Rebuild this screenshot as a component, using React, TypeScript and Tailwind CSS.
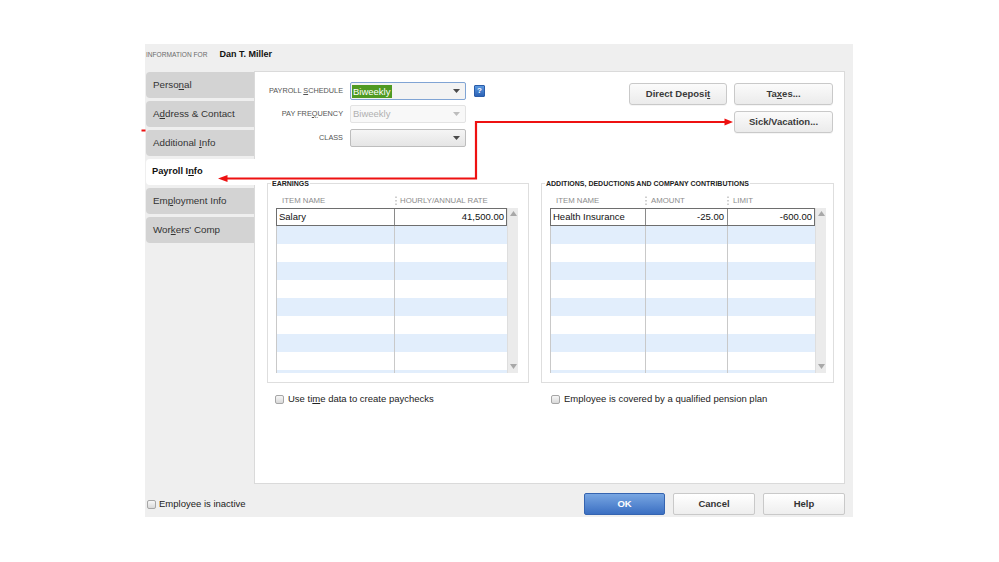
import React from "react";

function U({ children }: { children: React.ReactNode }) {
  return <span className="underline underline-offset-[1px] decoration-[1px]">{children}</span>;
}

function Caret({ c }: { c: string }) {
  return (
    <svg width="7" height="4" viewBox="0 0 7 4">
      <path d="M0 0H7L3.5 4Z" fill={c} />
    </svg>
  );
}

function Check() {
  return (
    <div className="w-[9px] h-[9px] shrink-0 rounded-[2px] border border-[#a6a6a6] bg-linear-to-b from-[#f7f7f7] to-[#d9d9d9]" />
  );
}

function Dots() {
  return (
    <svg width="2" height="10" viewBox="0 0 2 10" className="shrink-0">
      <rect x="0.5" y="0.5" width="1" height="1.5" fill="#a0a0a0" />
      <rect x="0.5" y="4" width="1" height="1.5" fill="#a0a0a0" />
      <rect x="0.5" y="7.5" width="1" height="1.5" fill="#a0a0a0" />
    </svg>
  );
}

function Scrollbar() {
  return (
    <div className="w-[11px] h-full bg-[#ebebeb] border-l border-[#dedede] flex flex-col items-center justify-between pt-[3px] pb-[4px]">
      <svg width="7" height="5" viewBox="0 0 7 5">
        <path d="M0 5H7L3.5 0Z" fill="#a8a8a8" />
      </svg>
      <svg width="7" height="5" viewBox="0 0 7 5">
        <path d="M0 0H7L3.5 5Z" fill="#a8a8a8" />
      </svg>
    </div>
  );
}

function Tab({ label, active }: { label: React.ReactNode; active?: boolean }) {
  return active ? (
    <div className="relative z-10 w-[109px] h-[26px] mb-[3px] bg-white rounded-l-[4px] flex items-center pl-[6px] text-[9.3px] font-bold text-[#111]">
      {label}
    </div>
  ) : (
    <div className="w-[108px] h-[26px] mb-[3px] bg-[#d3d3d3] rounded-l-[4px] flex items-center pl-[7px] text-[9.8px] text-[#333]">
      {label}
    </div>
  );
}

function Btn({ children, w }: { children: React.ReactNode; w: string }) {
  return (
    <div
      className={`${w} h-[22px] flex items-center justify-center rounded-[3px] border border-[#c9c9c9] bg-linear-to-b from-[#fbfbfb] to-[#ebebeb] text-[9.5px] font-bold text-[#3a3a3a] shadow-[0_1px_0_rgba(0,0,0,0.04)]`}
    >
      {children}
    </div>
  );
}

const rows = [0, 1, 2, 3, 4, 5, 6, 7, 8, 9];

function EarningsTable() {
  return (
    <div className="flex h-[165px]">
      <div className="w-[231px] h-full overflow-hidden flex flex-col">
        {rows.map((i) =>
          i === 0 ? (
            <div key={i} className="flex h-[18px] shrink-0 bg-white outline-1 outline-[#6e6e6e] -outline-offset-1 text-[9.5px] text-[#111]">
              <div className="w-[119px] h-full border-r border-[#8a8a8a] flex items-center pl-[3px]">Salary</div>
              <div className="flex-1 h-full flex items-center justify-end pr-[3px]">41,500.00</div>
            </div>
          ) : (
            <div key={i} className={`flex h-[18px] shrink-0 ${i % 2 === 1 ? "bg-[#e2eefc]" : "bg-white"}`}>
              <div className="w-[119px] h-full border-l border-r border-[#c9c9c9]" />
              <div className="flex-1 h-full" />
            </div>
          )
        )}
      </div>
      <Scrollbar />
    </div>
  );
}

function AdditionsTable() {
  return (
    <div className="flex h-[165px]">
      <div className="w-[265px] h-full overflow-hidden flex flex-col">
        {rows.map((i) =>
          i === 0 ? (
            <div key={i} className="flex h-[18px] shrink-0 bg-white outline-1 outline-[#6e6e6e] -outline-offset-1 text-[9.5px] text-[#111]">
              <div className="w-[96px] h-full border-r border-[#8a8a8a] flex items-center pl-[3px]">Health Insurance</div>
              <div className="w-[82px] h-full border-r border-[#8a8a8a] flex items-center justify-end pr-[3px]">-25.00</div>
              <div className="flex-1 h-full flex items-center justify-end pr-[3px]">-600.00</div>
            </div>
          ) : (
            <div key={i} className={`flex h-[18px] shrink-0 ${i % 2 === 1 ? "bg-[#e2eefc]" : "bg-white"}`}>
              <div className="w-[96px] h-full border-l border-r border-[#c9c9c9]" />
              <div className="w-[82px] h-full border-r border-[#c9c9c9]" />
              <div className="flex-1 h-full" />
            </div>
          )
        )}
      </div>
      <Scrollbar />
    </div>
  );
}

export default function App() {
  return (
    <div className="relative w-[999px] h-[562px] bg-white overflow-hidden pt-[44px] pl-[145px] font-['Liberation_Sans',Arial,Helvetica,sans-serif]">
      <div className="w-[708px] h-[473px] bg-[#efefef] flex flex-col">
        {/* header */}
        <div className="h-[27px] shrink-0 flex items-center pb-[5px] pl-[1px]">
          <span className="text-[6.6px] text-[#6b6b6b]">INFORMATION FOR</span>
          <span className="ml-[12px] text-[9px] font-bold text-[#111]">Dan T. Miller</span>
        </div>

        {/* body */}
        <div className="flex h-[413px] shrink-0">
          <div className="w-[109px] shrink-0 pt-[1px] pl-[1px]">
            <Tab label={<>Perso<U>n</U>al</>} />
            <Tab label={<>A<U>d</U>dress &amp; Contact</>} />
            <Tab label={<><span className="mr-[3px]">Additional</span><U>I</U>nfo</>} />
            <Tab active label={<>Payroll I<U>n</U>fo</>} />
            <Tab label={<>Em<U>p</U>loyment Info</>} />
            <Tab label={<>Wor<U>k</U>ers' Comp</>} />
          </div>

          <div className="w-[591px] h-[413px] bg-white border border-[#dadada] flex flex-col">
            {/* top section */}
            <div className="h-[111px] shrink-0 flex">
              <div className="flex flex-col pt-[10px]">
                <div className="flex items-center h-[18px]">
                  <div className="w-[88px] text-right text-[7.3px] text-[#555]">
                    PAYROLL <U>S</U>CHEDULE
                  </div>
                  <div className="ml-[7px] w-[116px] h-[18px] rounded-[2px] border border-[#80a4d4] bg-[#f3f3f3] flex items-center pl-[1px] pr-[5px]">
                    <span className="bg-[#4f9a22] text-white text-[9.5px] h-[13px] leading-[13px] px-[1px]">Biweekly</span>
                    <span className="ml-auto">
                      <Caret c="#4a4a4a" />
                    </span>
                  </div>
                  <div className="ml-[8px] w-[11px] h-[12px] rounded-[1px] border border-[#2a5ca8] bg-linear-to-b from-[#5b98e0] to-[#2d63b6] flex items-center justify-center text-white text-[8px] font-bold leading-none">
                    ?
                  </div>
                </div>
                <div className="flex items-center h-[18px] mt-[5px]">
                  <div className="w-[88px] text-right text-[7.3px] text-[#555]">
                    PAY FRE<U>Q</U>UENCY
                  </div>
                  <div className="ml-[7px] w-[116px] h-[18px] rounded-[2px] border border-[#e3e3e3] bg-[#f8f8f8] flex items-center pl-[2px] pr-[5px]">
                    <span className="text-[#b0b0b0] text-[9.5px]">Biweekly</span>
                    <span className="ml-auto">
                      <Caret c="#bdbdbd" />
                    </span>
                  </div>
                </div>
                <div className="flex items-center h-[18px] mt-[6px]">
                  <div className="w-[88px] text-right text-[7.3px] text-[#555]">CLASS</div>
                  <div className="ml-[7px] w-[116px] h-[18px] rounded-[2px] border border-[#bdbdbd] bg-linear-to-b from-[#f5f5f5] to-[#e5e5e5] flex items-center pr-[5px]">
                    <span className="ml-auto">
                      <Caret c="#4a4a4a" />
                    </span>
                  </div>
                </div>
              </div>

              <div className="ml-auto pt-[11px] pr-[11px] flex flex-col items-end">
                <div className="flex gap-[7px]">
                  <Btn w="w-[98px]">
                    Direct Deposi<U>t</U>
                  </Btn>
                  <Btn w="w-[99px]">
                    Ta<U>x</U>es...
                  </Btn>
                </div>
                <div className="mt-[6px]">
                  <Btn w="w-[99px]">Sick/Vacation...</Btn>
                </div>
              </div>
            </div>

            {/* fieldsets */}
            <div className="flex pl-[12px] gap-[12px]">
              <div className="flex flex-col">
                <div className="relative w-[262px] h-[200px] border border-[#dedede] pl-[8px] pt-[12px]">
                  <span className="absolute left-[3px] top-[-5px] bg-white px-[1px] text-[7px] font-bold text-[#222] leading-[9px]">
                    EARNINGS
                  </span>
                  <div className="flex h-[10px] items-center text-[7.8px] text-[#8c8c8c] mb-[2px]">
                    <div className="w-[119px] pl-[6px]">ITEM NAME</div>
                    <div className="flex items-center">
                      <Dots />
                      <span className="ml-[3px]">HOURLY/ANNUAL RATE</span>
                    </div>
                  </div>
                  <EarningsTable />
                </div>
                <div className="mt-[11px] h-[11px] flex items-center pl-[8px] gap-[4px] text-[9.5px] text-[#222]">
                  <Check />
                  <span>
                    Use ti<U>m</U>e data to create paychecks
                  </span>
                </div>
              </div>

              <div className="flex flex-col">
                <div className="relative w-[293px] h-[200px] border border-[#dedede] pl-[8px] pt-[12px]">
                  <span className="absolute left-[3px] top-[-5px] bg-white px-[1px] text-[7px] font-bold text-[#222] leading-[9px]">
                    ADDITIONS, DEDUCTIONS AND COMPANY CONTRIBUTIONS
                  </span>
                  <div className="flex h-[10px] items-center text-[7.8px] text-[#8c8c8c] mb-[2px]">
                    <div className="w-[95px] pl-[6px]">ITEM NAME</div>
                    <div className="w-[82px] flex items-center">
                      <Dots />
                      <span className="ml-[4px]">AMOUNT</span>
                    </div>
                    <div className="flex items-center">
                      <Dots />
                      <span className="ml-[4px]">LIMIT</span>
                    </div>
                  </div>
                  <AdditionsTable />
                </div>
                <div className="mt-[11px] h-[11px] flex items-center pl-[10px] gap-[4px] text-[9.5px] text-[#222]">
                  <Check />
                  <span>Employee is covered by a qualified pension plan</span>
                </div>
              </div>
            </div>
          </div>
        </div>

        {/* footer */}
        <div className="flex-1 flex items-start pt-[9px] pr-[8px]">
          <div className="h-[22px] flex items-center pl-[2px] gap-[3px] text-[9.5px] text-[#222]">
            <Check />
            <span>Employee is inactive</span>
          </div>
          <div className="ml-auto flex gap-[8px]">
            <div className="w-[81px] h-[22px] flex items-center justify-center rounded-[2px] border border-[#3564b0] bg-linear-to-b from-[#78a6e2] to-[#3b6fc2] text-white text-[9.5px] font-bold">
              OK
            </div>
            <div className="w-[82px] h-[22px] flex items-center justify-center rounded-[2px] border border-[#c9c9c9] bg-linear-to-b from-[#ffffff] to-[#eeeeee] text-[#333] text-[9.5px] font-bold">
              Cancel
            </div>
            <div className="w-[82px] h-[22px] flex items-center justify-center rounded-[2px] border border-[#c9c9c9] bg-linear-to-b from-[#ffffff] to-[#eeeeee] text-[#333] text-[9.5px] font-bold">
              Help
            </div>
          </div>
        </div>
      </div>

      {/* red annotation overlay */}
      <svg className="absolute left-0 top-0 z-20 pointer-events-none" width="999" height="562" viewBox="0 0 999 562">
        <path d="M226 178.5H476V122H726" fill="none" stroke="#ee1111" strokeWidth="2.2" />
        <path d="M218 178.5L227.5 175V182Z" fill="#ee1111" />
        <path d="M733 122L724.5 118.5V125.5Z" fill="#ee1111" />
        <rect x="141.5" y="129.5" width="4" height="2" fill="#ee1111" />
      </svg>
    </div>
  );
}
